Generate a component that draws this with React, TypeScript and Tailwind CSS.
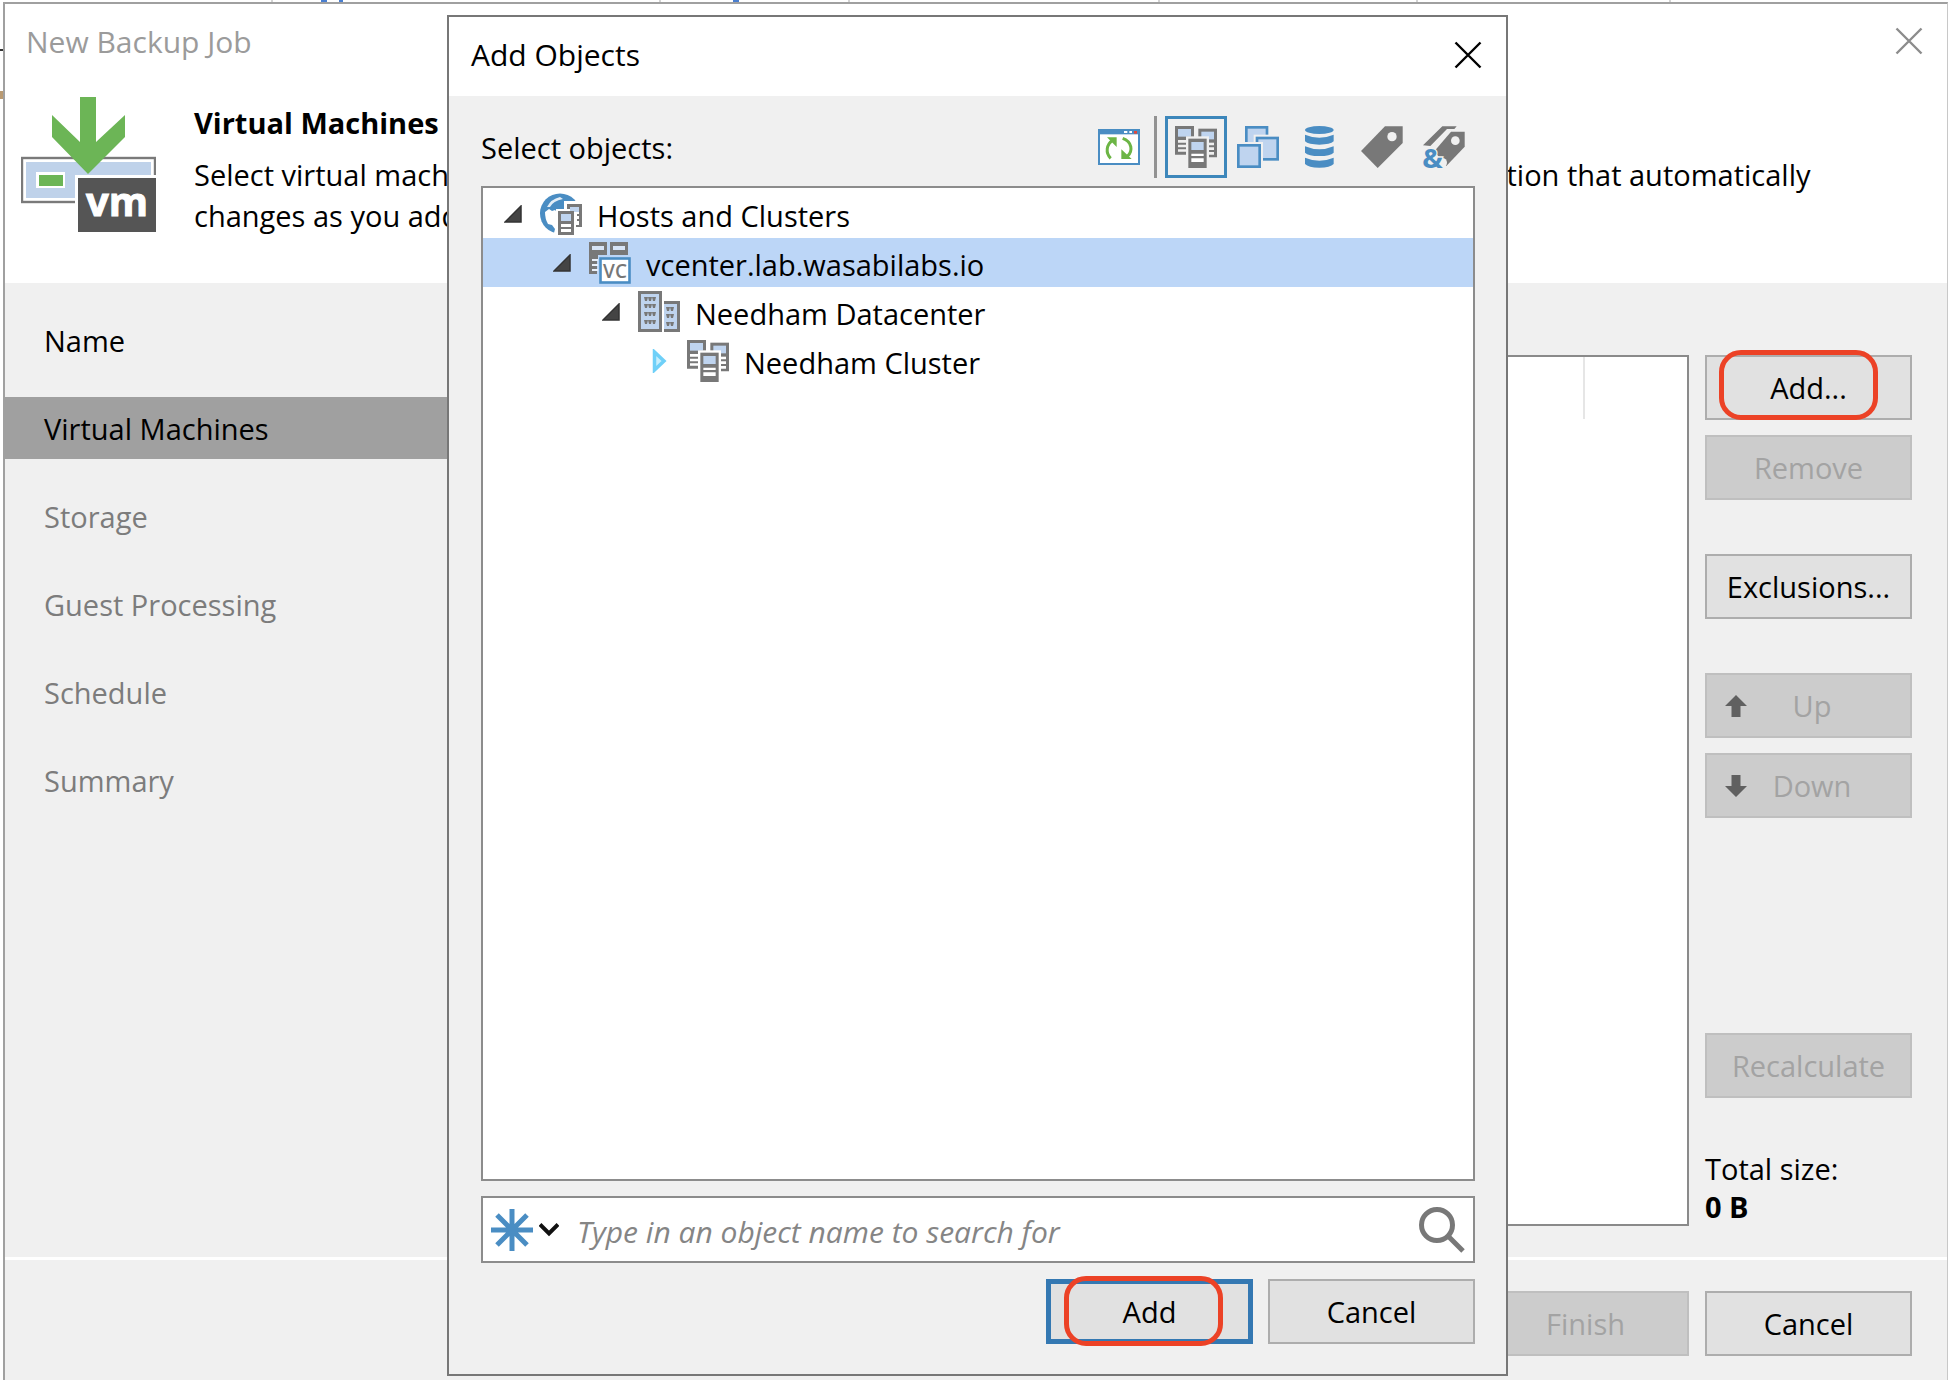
import React from "react";

const GREY = "#787878";
const BLUE = "#4a8dc3";
const PALE = "#bfd4ef";

function CloseIcon() {
  return (
    <svg width="28" height="28" viewBox="0 0 28 28" fill="none" stroke="currentColor" strokeWidth="2.4" aria-hidden="true">
      <path d="M1.5 1.5 26.5 26.5M26.5 1.5 1.5 26.5" />
    </svg>
  );
}

function JobIcon() {
  return (
    <svg width="135" height="136" viewBox="0 0 135 136" aria-hidden="true">
      <rect x="1" y="61" width="133" height="44" fill="#fff" stroke="#7a7a7a" strokeWidth="2.4" />
      <rect x="5" y="65" width="125" height="36" fill="#bfd2ea" />
      <rect x="15" y="75" width="29" height="16" fill="#fff" />
      <rect x="18" y="78" width="24" height="11" fill="#6cb556" />
      <path d="M59 0H75V45L104 18V40L67 77 31 40V18L59 45Z" fill="#6cb556" />
      <rect x="54" y="78" width="81" height="58" fill="#fff" />
      <rect x="57" y="81" width="78" height="54" fill="#555" />
      <text x="96" y="119" textAnchor="middle" fill="#fff" stroke="#fff" strokeWidth="1" fontSize="40" fontWeight="700" fontFamily='"Open Sans", sans-serif'>
        vm
      </text>
    </svg>
  );
}

function RefreshIcon() {
  return (
    <svg width="42" height="36" viewBox="0 0 126 108" aria-hidden="true">
      <rect x="3" y="3" width="120" height="102" fill="#fff" stroke={BLUE} strokeWidth="6" />
      <rect x="3" y="2" width="120" height="14" fill={BLUE} />
      <path d="M78 9h10M94 9h8" stroke="#fff" strokeWidth="6" />
      <rect x="108" y="6" width="9" height="8" fill="#e0483c" />
      <g fill="none" stroke="#6cb545" strokeWidth="9">
        <path d="M38 88C22 72 24 46 46 32" />
        <path d="M74 28C102 38 106 66 88 82" />
      </g>
      <path d="M27 25H56V54ZM70 61V90H101Z" fill="#6cb545" />
    </svg>
  );
}

function ClusterIcon({ paper = "#fff" }: { paper?: string }) {
  return (
    <svg width="42" height="42" viewBox="0 0 126 126" aria-hidden="true">
      <rect width="57" height="42" fill={GREY} />
      <rect x="9" y="9" width="39" height="23" fill={PALE} />
      <path d="M0 40H9V86H0ZM9 50H33V56H9ZM9 64H33V70H9ZM9 77H33V86H9Z" fill={GREY} />
      <rect x="70" y="8" width="56" height="42" fill={GREY} />
      <rect x="79" y="17" width="38" height="23" fill={PALE} />
      <path d="M117 48H126V94H117ZM100 58H117V64H100ZM100 72H117V78H100ZM100 86H117V94H100Z" fill={GREY} />
      <rect x="33" y="31" width="69" height="95" fill={paper} />
      <rect x="40" y="38" width="55" height="88" fill={GREY} />
      <rect x="49" y="48" width="37" height="24" fill={PALE} />
      <path d="M49 83H86V90H49ZM49 97H86V108H49Z" fill="#fff" />
    </svg>
  );
}

function MachinesIcon() {
  return (
    <svg width="42" height="42" viewBox="0 0 126 126" fill={PALE} stroke={BLUE} strokeWidth="8" aria-hidden="true">
      <rect x="28" y="4" width="62" height="56" />
      <rect x="50" y="26" width="76" height="82" fill="#f0f0f0" stroke="none" />
      <rect x="60" y="36" width="62" height="64" />
      <rect x="-4" y="48" width="82" height="82" fill="#f0f0f0" stroke="none" />
      <rect x="4" y="58" width="64" height="64" />
    </svg>
  );
}

function DatabaseIcon() {
  return (
    <svg width="42" height="42" viewBox="0 0 126 126" fill={BLUE} aria-hidden="true">
      <ellipse cx="61" cy="12" rx="43" ry="12" />
      <path d="M18 26Q61 44 104 26V46Q94 56 61 56T18 46Z" />
      <path d="M18 61Q61 79 104 61V80Q94 90 61 90T18 80Z" />
      <path d="M18 95Q61 113 104 95V114Q94 125 61 125T18 114Z" />
    </svg>
  );
}

function TagIcon() {
  return (
    <svg width="42" height="42" viewBox="0 0 126 126" aria-hidden="true">
      <path d="M72 1H125V51L50 126 0 75Z" fill={GREY} />
      <circle cx="93" cy="32" r="14" fill="#f0f0f0" />
    </svg>
  );
}

function TagsIcon() {
  return (
    <svg width="42" height="42" viewBox="0 0 126 126" className="overflow-visible" aria-hidden="true">
      <path d="M0 58 58 1H101L94 9H72L22 60Z" fill={GREY} />
      <path d="M84 17H125V62L70 120 34 76Z" fill={GREY} />
      <circle cx="97" cy="44" r="13" fill="#f0f0f0" />
      <circle cx="58" cy="110" r="14" fill="#f0f0f0" />
      <text x="-2" y="125" fill={BLUE} stroke="#f0f0f0" strokeWidth="8" paintOrder="stroke" fontSize="82" fontWeight="700" fontFamily='"Open Sans", sans-serif'>
        &amp;
      </text>
    </svg>
  );
}

function GlobeIcon() {
  return (
    <svg width="42" height="42" viewBox="0 0 42 42" aria-hidden="true">
      <circle cx="20" cy="20.500" r="20" fill={BLUE} />
      <path d="M7 14Q11 6 20 4L23 6Q13 8 10 14Z" fill="#e4eef7" />
      <path d="M5 19 9 16 12 18 15 17 18 20V42L14 40 15 36 12 32 8 31Q5 26 5 19Z" fill="#fff" />
      <path d="M24 8H42V36H35V42H16V16H24Z" fill="#fff" />
      <path d="M27 11H42V34H36V32H39V28H37V26H39V23H37V21H39V14H30V16H27Z" fill={GREY} />
      <rect x="30" y="14" width="9" height="5" fill={PALE} />
      <path d="M18 18H34V42H18Z" fill={GREY} />
      <rect x="21" y="21" width="10" height="7" fill={PALE} />
      <path d="M21 31H31V34H21ZM21 36H31V39H21Z" fill="#fff" />
    </svg>
  );
}

function VCenterIcon() {
  return (
    <svg width="42" height="42" viewBox="0 0 42 42" aria-hidden="true">
      <path d="M0 0H18V13H9V17H8V32H0ZM21 0H39V13H21Z" fill={GREY} />
      <path d="M3 4H15V8H3ZM24 4H36V8H24Z" fill="#d7e4f6" />
      <path d="M3 17H9V19H3ZM3 22H9V24H3ZM3 27H9V29H3Z" fill="#e9f0fa" />
      <rect x="11.500" y="16.500" width="29" height="24" fill="#fff" stroke={BLUE} strokeWidth="2.600" />
      <text x="26" y="36" textAnchor="middle" fill="#777" fontSize="19" fontWeight="600" fontFamily='"Open Sans", sans-serif'>
        VC
      </text>
    </svg>
  );
}

function DatacenterIcon() {
  const row = (x: number, y: number, n: number) =>
    Array.from({ length: n }, (_, i) => <path key={`${x}-${y}-${i}`} d={`M${x + i * 4} ${y}h4l-1 4h-2z`} />);
  return (
    <svg width="42" height="42" viewBox="0 0 42 42" aria-hidden="true">
      <rect x="1.500" y="1.500" width="21" height="38" fill={PALE} stroke={GREY} strokeWidth="3" />
      <path d="M26 10H42V41H26V38H39V13H26Z" fill={GREY} />
      <rect x="26" y="13" width="13" height="25" fill={PALE} />
      <g fill={GREY}>
        {[6, 13, 21, 29].map((y) => row(6, y, 3))}
        {[16, 23, 31].map((y) => row(28, y, 2))}
      </g>
    </svg>
  );
}

function Expander({ open }: { open: boolean }) {
  return open ? (
    <svg width="18" height="18" viewBox="0 0 18 18" aria-hidden="true">
      <path d="M1 17H17V1Z" fill="#444" stroke="#333" strokeWidth="1.500" />
    </svg>
  ) : (
    <svg width="18" height="24" viewBox="0 0 18 24" aria-hidden="true">
      <path d="M3.500 3V21L13 12Z" fill="#c8effd" stroke="#6fd0f8" strokeWidth="3.500" />
    </svg>
  );
}

function ArrowIcon({ down = false }: { down?: boolean }) {
  return (
    <svg width="22" height="24" viewBox="0 0 22 24" aria-hidden="true">
      <path d={down ? "M6.500 1V12H0L11 23 22 12H15.500V1Z" : "M11 1 22 12H15.500V23H6.500V12H0Z"} fill="#606060" />
    </svg>
  );
}

function PushButton({
  children,
  disabled = false,
  primary = false,
  icon,
}: {
  children: React.ReactNode;
  disabled?: boolean;
  primary?: boolean;
  icon?: React.ReactNode;
}) {
  const tone = disabled
    ? "border-2 border-[#bfbfbf] bg-[#cccccc] text-[#a3a3a3]"
    : primary
      ? "border-[5px] border-[#3478b2] bg-[#e1e1e1]"
      : "border-2 border-[#adadad] bg-[#e1e1e1]";
  return (
    <button type="button" disabled={disabled} className={`flex h-[65px] w-[207px] items-center ${icon ? "pl-[18px]" : "justify-center"} ${tone}`}>
      {icon}
      {icon ? <span className="w-[130px] text-center">{children}</span> : children}
    </button>
  );
}

function Highlight({ place }: { place: string }) {
  return <span aria-hidden="true" className={`pointer-events-none absolute h-[70px] w-[159px] rounded-[22px] border-[5px] border-[#ec4226] ${place}`} />;
}

const steps = [
  { label: "Name", tone: "" },
  { label: "Virtual Machines", tone: "bg-[#a0a0a0]" },
  { label: "Storage", tone: "text-[#7c7c7c]" },
  { label: "Guest Processing", tone: "text-[#7c7c7c]" },
  { label: "Schedule", tone: "text-[#7c7c7c]" },
  { label: "Summary", tone: "text-[#7c7c7c]" },
];

const nodes = [
  { label: "Hosts and Clusters", indent: "pl-[21px]", icon: <GlobeIcon />, open: true, selected: false },
  { label: "vcenter.lab.wasabilabs.io", indent: "pl-[70px]", icon: <VCenterIcon />, open: true, selected: true },
  { label: "Needham Datacenter", indent: "pl-[119px]", icon: <DatacenterIcon />, open: true, selected: false },
  { label: "Needham Cluster", indent: "pl-[168px]", icon: <ClusterIcon />, open: false, selected: false },
];

const views = [
  { label: "Hosts and Clusters", icon: <ClusterIcon paper="#f0f0f0" />, active: true },
  { label: "VMs and Templates", icon: <MachinesIcon />, active: false },
  { label: "Datastores and VMs", icon: <DatabaseIcon />, active: false },
  { label: "VMs and Tags", icon: <TagIcon />, active: false },
  { label: "Tag Combinations", icon: <TagsIcon />, active: false },
];

function AddObjectsDialog() {
  return (
    <section
      role="dialog"
      aria-labelledby="add-objects-title"
      className="absolute top-[15px] right-[444px] bottom-2 left-[447px] flex flex-col border-2 border-[#777] bg-[#f0f0f0]"
    >
      <header className="flex h-[79px] shrink-0 items-center justify-between bg-white pr-6 pb-1 pl-[22px]">
        <h2 id="add-objects-title" className="text-[30px]">
          Add Objects
        </h2>
        <button type="button" aria-label="Close">
          <CloseIcon />
        </button>
      </header>
      <div className="flex min-h-0 flex-1 flex-col pt-5 pr-[31px] pb-[30px] pl-8">
        <div className="mb-2 flex items-center">
          <span id="tree-label" className="flex-1 pt-0.5">
            Select objects:
          </span>
          <button type="button" aria-label="Refresh" className="mr-[14px]">
            <RefreshIcon />
          </button>
          <span className="mr-2 h-[62px] w-[3px] bg-[#929292]" />
          {views.map((v) => (
            <button
              key={v.label}
              type="button"
              aria-label={v.label}
              aria-pressed={v.active}
              className={`flex size-[62px] items-center justify-center ${v.active ? "border-[3px] border-[#3d87bb]" : ""}`}
            >
              {v.icon}
            </button>
          ))}
        </div>
        <ul role="tree" aria-labelledby="tree-label" className="flex-1 border-2 border-[#8c8c8c] bg-white pt-px">
          {nodes.map((n, i) => (
            <li
              key={n.label}
              role="treeitem"
              aria-level={i + 1}
              aria-selected={n.selected}
              className={`flex h-[49px] items-center ${n.indent} ${n.selected ? "bg-[#bcd6f7]" : ""}`}
            >
              <Expander open={n.open} />
              <span className="mr-[15px] ml-[18px]">{n.icon}</span>
              <span className="pt-1">{n.label}</span>
            </li>
          ))}
        </ul>
        <div className="mt-[15px] flex h-[67px] items-center border-2 border-[#8c8c8c] bg-white pr-[7px] pl-2">
          <button type="button" aria-label="Search scope" className="flex items-center gap-1.5">
            <svg width="42" height="42" viewBox="0 0 42 42" stroke={BLUE} strokeWidth="5" aria-hidden="true">
              <path d="M21 0V42M0 21H42M6 6 36 36M36 6 6 36" />
            </svg>
            <svg width="20" height="14" viewBox="0 0 20 14" fill="none" stroke="#111" strokeWidth="4" aria-hidden="true">
              <path d="M1 1.500 10 10.500 19 1.500" />
            </svg>
          </button>
          <input
            type="text"
            aria-label="Search objects"
            placeholder="Type in an object name to search for"
            className="ml-[18px] min-w-0 flex-1 pt-1 text-[30px] italic outline-none placeholder:text-[#858585]"
          />
          <button type="button" aria-label="Search">
            <svg width="48" height="48" viewBox="0 0 48 48" fill="none" stroke={GREY} strokeWidth="5" aria-hidden="true">
              <circle cx="19" cy="19" r="15.500" />
              <path d="M30 30 45 45" />
            </svg>
          </button>
        </div>
        <div className="mt-4 flex justify-end gap-[15px]">
          <div className="relative">
            <PushButton primary>Add</PushButton>
            <Highlight place="-top-[3px] left-[18px]" />
          </div>
          <PushButton>Cancel</PushButton>
        </div>
      </div>
    </section>
  );
}

/* Sliver of the application's column headers above the wizard. */
function ColumnStrip() {
  return (
    <div aria-hidden="true" className="flex h-0.5">
      <span className="w-[270px] border-r-2 border-[#d4d4d4]" />
      <span className="flex w-[388px] gap-3 border-r-2 border-[#d4d4d4] pl-12">
        <span className="w-1.5 bg-[#4a7fd0]" />
        <span className="w-1 bg-[#4a7fd0]" />
      </span>
      <span className="flex w-[189px] border-r-2 border-[#d4d4d4] pl-[72px]">
        <span className="w-1.5 bg-[#4a7fd0]" />
      </span>
      <span className="w-[310px] border-r-2 border-[#d4d4d4]" />
      <span className="w-[258px] border-r-2 border-[#d4d4d4]" />
      <span className="w-[253px] border-r-2 border-[#d4d4d4]" />
    </div>
  );
}

export default function App() {
  return (
    <div className="relative flex min-h-screen flex-col overflow-hidden bg-white pr-1 pb-1 pl-[3px] font-['Open_Sans',sans-serif] text-[29px] leading-[38px] text-black">
      <ColumnStrip />
      <span aria-hidden="true" className="absolute top-[49px] left-0 h-0.5 w-[3px] bg-[#333]" />
      <span aria-hidden="true" className="absolute top-[91px] left-0 h-2 w-[3px] bg-[#b99a72]" />
      <main className="flex flex-1 flex-col border-t-2 border-r border-l-2 border-t-[#a0a0a0] border-r-[#c8c8c8] border-l-[#a0a0a0] bg-[#f0f0f0]">
        <header className="bg-white pb-[47px]">
          <div className="flex h-[74px] items-center justify-between pr-6 pl-[21px]">
            <h1 className="pt-0.5 text-[30px] text-[#9b9b9b]">New Backup Job</h1>
            <button type="button" aria-label="Close wizard" className="text-[#8c8c8c]">
              <CloseIcon />
            </button>
          </div>
          <div className="flex items-start gap-[38px] pt-[19px] pl-4">
            <JobIcon />
            <div className="pt-[7px]">
              <h2 className="font-bold">Virtual Machines</h2>
              <p className="pt-3 leading-[41px]">
                Select virtual machines to process via container, or granularly.&nbsp;&nbsp; Container provides dynamic selection that automatically
                <br />
                changes as you add new VMs into container.
              </p>
            </div>
          </div>
        </header>
        <div className="flex flex-1">
          <nav aria-label="Steps" className="w-[455px] pt-[26px]">
            <ol className="flex flex-col gap-[26px]">
              {steps.map((s) => (
                <li key={s.label} className={`flex h-[62px] items-center pt-0.5 pl-[39px] ${s.tone}`} aria-current={s.label === "Virtual Machines" ? "step" : undefined}>
                  {s.label}
                </li>
              ))}
            </ol>
          </nav>
          <div className="flex flex-1 gap-4 pt-[72px] pr-[35px] pb-[31px] pl-8">
            <div aria-label="Virtual machines to backup" className="flex flex-1 items-start justify-end border-2 border-[#8a8a8a] bg-white">
              <span className="h-[62px] w-[104px] border-l-2 border-[#e6e6e6]" />
            </div>
            <div className="flex flex-col">
              <div className="relative">
                <PushButton>Add...</PushButton>
                <Highlight place="-top-[5px] left-[14px]" />
              </div>
              <div className="mt-[15px]">
                <PushButton disabled>Remove</PushButton>
              </div>
              <div className="mt-[54px]">
                <PushButton>Exclusions...</PushButton>
              </div>
              <div className="mt-[54px] flex flex-col gap-[15px]">
                <PushButton disabled icon={<ArrowIcon />}>
                  Up
                </PushButton>
                <PushButton disabled icon={<ArrowIcon down />}>
                  Down
                </PushButton>
              </div>
              <div className="mt-auto">
                <PushButton disabled>Recalculate</PushButton>
              </div>
              <p className="mt-[52px]">
                Total size:
                <br />
                <strong>0 B</strong>
              </p>
            </div>
          </div>
        </div>
        <footer className="flex justify-end gap-4 border-t-[3px] border-white pt-[31px] pr-[35px] pb-6">
          <PushButton disabled>Finish</PushButton>
          <PushButton>Cancel</PushButton>
        </footer>
      </main>
      <AddObjectsDialog />
    </div>
  );
}
